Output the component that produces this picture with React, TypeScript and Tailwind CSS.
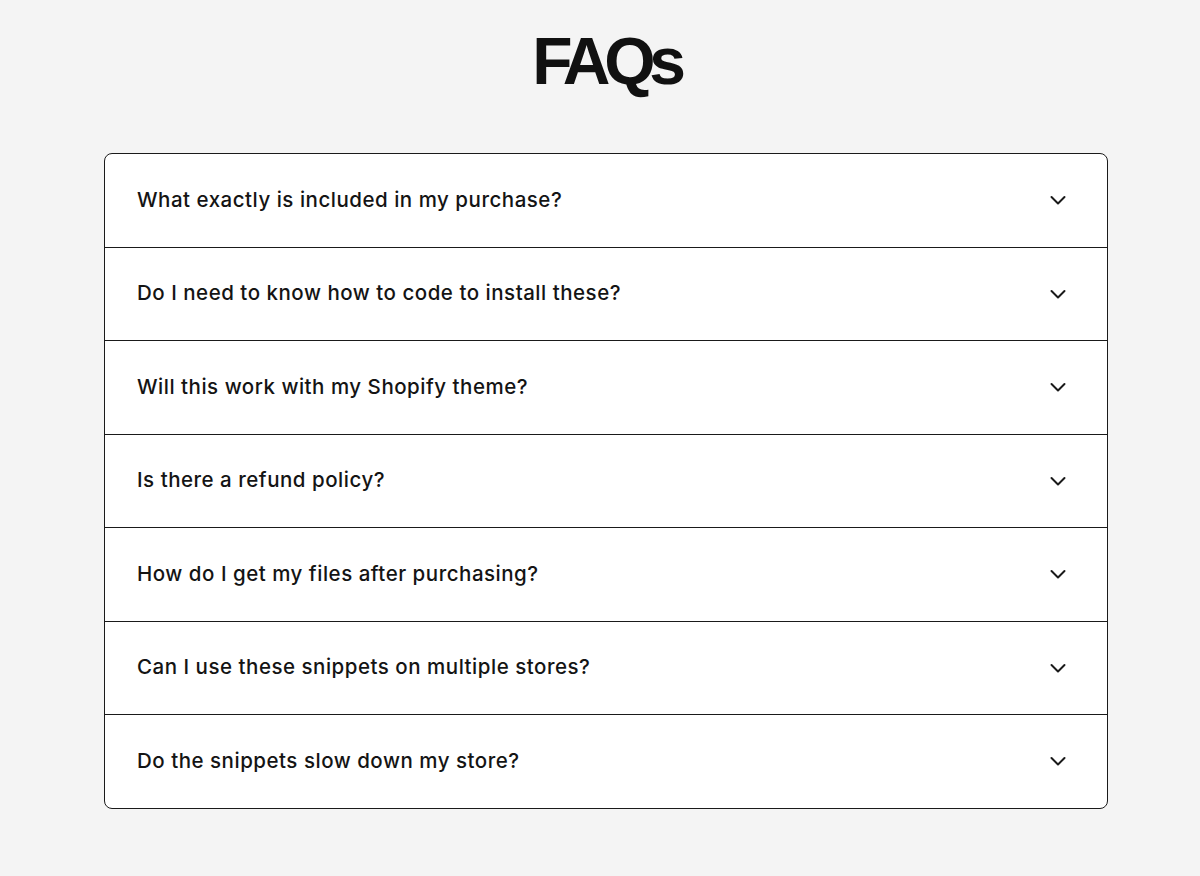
import React, { useState } from "react";

const faqs = [
  {
    q: "What exactly is included in my purchase?",
    a: "You get every snippet in the pack, copy-ready Liquid, CSS and JS files, plus setup notes for each one.",
  },
  {
    q: "Do I need to know how to code to install these?",
    a: "No. Each snippet comes with step-by-step instructions you can follow by pasting code into your theme editor.",
  },
  {
    q: "Will this work with my Shopify theme?",
    a: "The snippets are built for Online Store 2.0 themes and work with Dawn and most popular themes.",
  },
  {
    q: "Is there a refund policy?",
    a: "Because these are digital files, all sales are final. Reach out if anything doesn't work and we'll help.",
  },
  {
    q: "How do I get my files after purchasing?",
    a: "You'll receive a download link by email right after checkout.",
  },
  {
    q: "Can I use these snippets on multiple stores?",
    a: "Yes, you can use them on any store you own or manage.",
  },
  {
    q: "Do the snippets slow down my store?",
    a: "No. They are lightweight and load only what they need.",
  },
];

const Chevron = ({ open }: { open: boolean }) => (
  <svg
    width="20"
    height="20"
    viewBox="0 0 20 20"
    fill="none"
    stroke="#1a1a1a"
    strokeWidth="2"
    strokeLinecap="round"
    strokeLinejoin="round"
    className={open ? "rotate-180 transition" : "transition"}
  >
    <path d="M3.5 7l6.5 6.5L16.5 7" />
  </svg>
);

const App = () => {
  const [openIndex, setOpenIndex] = useState<number | null>(null);

  return (
    <main className="min-h-screen bg-[#f4f4f4] flex flex-col items-center pt-[22px] pb-16 pl-3">
      <h1 className="font-['Liberation_Sans',Arial,sans-serif] text-[66px] leading-[78px] font-bold tracking-[-0.095em] text-[#111111]">
        FAQs
      </h1>

      <div className="mt-[53px] w-[1004px] bg-white border border-[#1a1a1a] rounded-lg overflow-hidden font-['Inter',sans-serif]">
        {faqs.map((item, i) => {
          const open = openIndex === i;
          return (
            <div key={item.q} className={i > 0 ? "border-t border-[#1a1a1a]" : ""}>
              <button
                type="button"
                onClick={() => setOpenIndex(open ? null : i)}
                className="w-full h-[92.5px] flex items-center justify-between pl-8 pr-[39px] text-left"
              >
                <span className="text-[20.5px] font-medium text-[#141414] tracking-[0.025em]">
                  {item.q}
                </span>
                <Chevron open={open} />
              </button>
              {open && (
                <p className="px-8 pb-7 -mt-3 text-[16px] text-[#555555]">{item.a}</p>
              )}
            </div>
          );
        })}
      </div>
    </main>
  );
};

export default App;
